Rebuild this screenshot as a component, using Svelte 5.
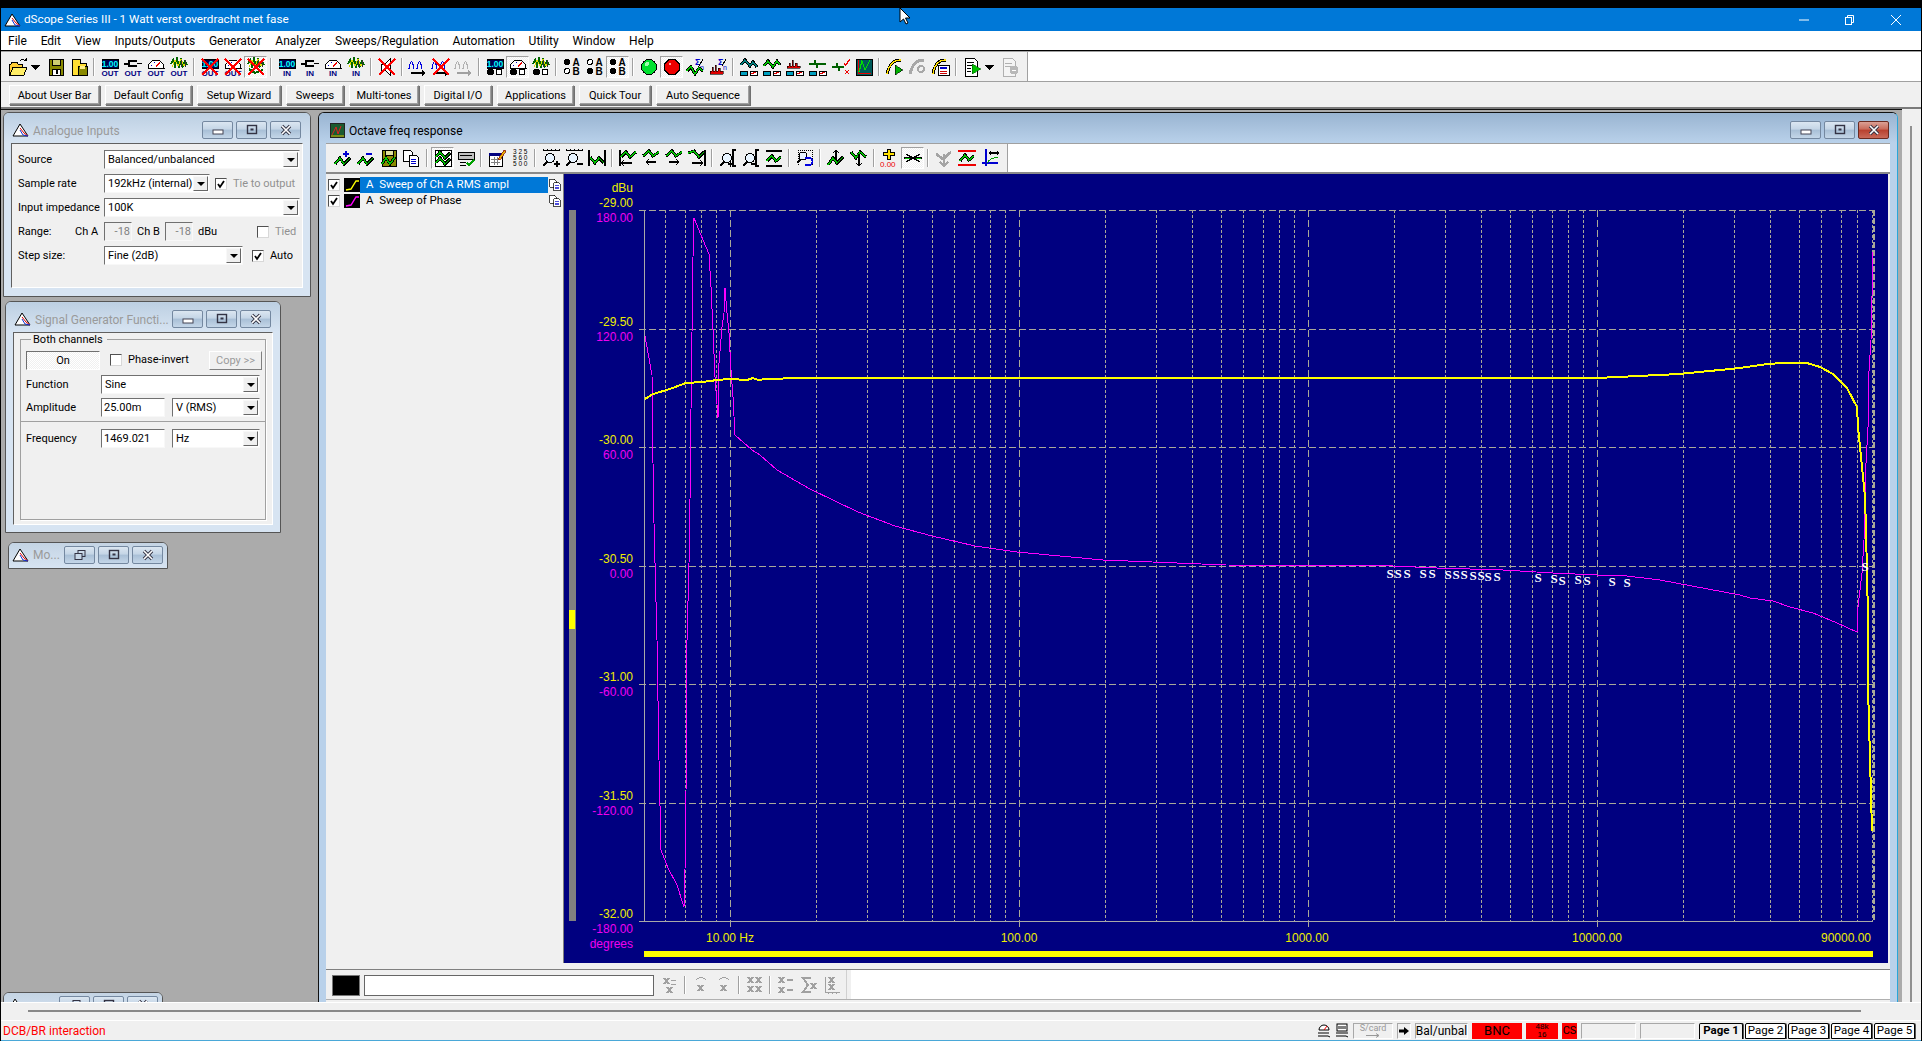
<script>
  const menu = ["File","Edit","View","Inputs/Outputs","Generator","Analyzer","Sweeps/Regulation","Automation","Utility","Window","Help"];
  const userBar = [["About User Bar",91],["Default Config",87],["Setup Wizard",84],["Sweeps",58],["Multi-tones",70],["Digital I/O",68],["Applications",77],["Quick Tour",72],["Auto Sequence",94]];

  // icon parts, all in a 20x20 box
  const lbl = (t) => `<text x="10" y="19" text-anchor="middle" font-size="8" font-weight="700" fill="#000080" font-family="Liberation Sans">${t}</text>`;
  const num = `<rect x="2" y="2" width="16" height="9" fill="#000050" stroke="#000"/><text x="10" y="10" text-anchor="middle" font-size="8.5" font-weight="700" fill="#00ffff" font-family="Liberation Sans">1.00</text>`;
  const sw = `<path d="M1 7h5M6 3v7M6 4h8M6 9h8M14 6.500h5" fill="none" stroke="#000" stroke-width="1.500"/>`;
  const gauge = `<path d="M2 11a8 8 0 0 1 16 0z" fill="#fff" stroke="#000"/><path d="M10 10l4-5" stroke="#e00" stroke-width="1.200"/><path d="M5 8l1 1M8 5v1" stroke="#00c"/>`;
  const noise = `<path d="M2 7l2-4 2 6 2-7 2 7 2-6 2 6 2-5 2 4" fill="none" stroke="#060" stroke-width="2"/><path d="M3 10l3-7 3 6 3-7 3 7 2-3" fill="none" stroke="#dd0" stroke-width="1"/><path d="M12 3v7M16 3v7" stroke="#333"/>`;
  const xmark = `<path d="M2 2L18 18M18 2L2 18" stroke="#f00" stroke-width="2"/>`;
  const dots = (a, b) => `<circle cx="5.500" cy="15" r="3" fill="${a ? "#000" : "#fff"}" stroke="#000"/><circle cx="14" cy="15" r="3" fill="${b ? "#000" : "#fff"}" stroke="#000"/>`;
  const ab = (a, b) => `<circle cx="5" cy="5" r="2.500" fill="${a ? "#000" : "#fff"}" stroke="#000"/><circle cx="5" cy="14" r="2.500" fill="${b ? "#000" : "#fff"}" stroke="#000"/><text x="14" y="9" text-anchor="middle" font-size="10" font-weight="700" font-family="Liberation Sans">A</text><text x="14" y="18" text-anchor="middle" font-size="10" font-weight="700" font-family="Liberation Sans">B</text>`;
  const zig = (p, c = "#00c800") => `<polyline points="${p}" fill="none" stroke="#000" stroke-width="3"/><polyline points="${p}" fill="none" stroke="${c}" stroke-width="1.400"/>`;
  const dual = (c, a) => `<path d="M1 12Q3.500-3 6 12M9 12Q11.500-3 14 12" fill="none" stroke="${c}" stroke-width="1.200"/><path d="M3 15h11v-2l4 3-4 3v-2H3z" fill="${a}"/>`;
  const floppy = `<rect x="3" y="2" width="14" height="16" fill="#8a8a00" stroke="#000"/><rect x="6" y="2" width="8" height="6" fill="#d0d070" stroke="#000"/><rect x="6" y="12" width="8" height="6" fill="#fff" stroke="#000"/><rect x="10" y="13" width="2" height="4"/>`;
  const doc = `<path d="M1 2h7l2 2v9H1z" fill="#fff" stroke="#000"/><path d="M7 7h7l2 2v9H7z" fill="#fff" stroke="#000"/><path d="M9 11h5M9 13h5M9 15h5" stroke="#00c"/>`;
  const slots = `<rect x="1" y="14" width="7" height="4" fill="#00a0c0" stroke="#000"/><rect x="11" y="14" width="7" height="4" fill="#fff" stroke="#000"/><path d="M12 17l5-2" stroke="#d00"/>`;
  const spect = `<path d="M2 11V9h2V6h1v3h2V3h1v6h2V6h2v3h3v2z" fill="#e00000" stroke="#000" stroke-width=".6"/>`;
  const sigma = `<text x="10" y="8" font-size="9" font-weight="700" fill="#00c" font-family="Liberation Sans">Σ</text><path d="M14 9l4-7" stroke="#000"/><text x="15" y="13" font-size="7" fill="#00c" font-family="Liberation Sans">n</text>`;
  const lens = (s) => `<circle cx="9" cy="10" r="4.500" fill="#e8f4ff" stroke="#000" stroke-width="1.200"/><path d="M6 14l-4 4" stroke="#000" stroke-width="2"/><path d="${s}" stroke="#000" stroke-width="1.200"/>`;
  const ruler = `<path d="M2 2h16M2 1v2M6 1v2M10 1v2M14 1v2M18 1v2" stroke="#000"/>`;
  const brk = `<path d="M18 2h-3v16h3" fill="none" stroke="#000" stroke-width="1.200"/>`;
  const arrow = (d) => `<path d="${d}" fill="none" stroke="#000" stroke-width="1.300"/>`;
  const gx = (x, y) => `<path d="M${x} ${y}l5 6M${x + 5} ${y}l-5 6" stroke="#a0a0a0" stroke-width="2"/>`;

  const icons = {
    open: `<path d="M1 7h2l1-2h5l1 2h4v3H5l-3 8H1z" fill="#ffcc33" stroke="#000"/><path d="M5 10h14l-3 8H2z" fill="#ffee66" stroke="#000"/><path d="M12 4q3-3 5 0" fill="none" stroke="#000"/><path d="M15 4h4v-3z"/>`,
    caret: `<path d="M2 8h9l-4.500 5z"/>`,
    floppy,
    saveas: `<path d="M3 2h8v4h6v12H3z" fill="#ffdd33" stroke="#000"/><rect x="9" y="9" width="9" height="9" fill="#8a8a00" stroke="#000"/><rect x="11" y="9" width="5" height="3" fill="#ffee88"/>`,
    out1: num + lbl("OUT"), out2: sw + lbl("OUT"), out3: gauge + lbl("OUT"), out4: noise + lbl("OUT"),
    xout1: num + lbl("OUT") + xmark, xout3: gauge + lbl("OUT") + xmark, xout4: noise + `<path d="M3 12l6 4 8-3" fill="none" stroke="#060" stroke-width="2"/>` + xmark,
    in1: num + lbl("IN"), in2: sw + lbl("IN"), in3: gauge + lbl("IN"), in4: noise + lbl("IN"),
    mute: `<path d="M4 7h4l5-5v16l-5-5H4z" fill="#fff" stroke="#000"/>` + xmark,
    dual: dual("#0000e0", "#000"), xdual: dual("#0000e0", "#000") + xmark, gdual: dual("#b0b0b0", "#a0a0a0"),
    adc1: num + dots(1, 0), adc2: gauge + dots(1, 0), adc3: noise + dots(1, 0),
    ab1: ab(1, 0), ab2: ab(0, 1), ab3: ab(1, 1),
    go: `<circle cx="10" cy="10" r="7.500" fill="#00e030" stroke="#000"/><circle cx="8" cy="7" r="2" fill="#a0ffb0"/>`,
    stop: `<path d="M7 2.500h6L17.500 7v6L13 17.500H7L2.500 13V7z" fill="#ee0000" stroke="#000"/><circle cx="8" cy="7" r="1.500" fill="#ffa0a0"/>`,
    sig1: sigma + zig("2,14 6,10 10,17 14,11 18,14"),
    sig2: sigma + `<path d="M2 17V14h2V10h1v4h2V8h1v6h2v-3h2v3h3v3z" fill="#e00000" stroke="#000" stroke-width=".6"/>`,
    box1: zig("2,8 6,3 11,9 14,5 18,10", "#008080") + slots, box2: zig("2,9 6,4 11,10 15,4 18,8") + slots,
    box3: spect + slots,
    box4: `<path d="M1 7h5l1-4 2 8 1-4h8" fill="none" stroke="#006000" stroke-width="1.300"/>` + slots,
    chk: `<path d="M1 10h4l1-4 2 8 1-4h4" fill="none" stroke="#006000" stroke-width="1.300"/><path d="M13 6l2 2 4-6" fill="none" stroke="#e00" stroke-width="1.400"/><path d="M14 13l4 4M18 13l-4 4" stroke="#e00" stroke-width="1.400"/>`,
    scope: `<rect x="2" y="2" width="16" height="16" fill="#005a5a" stroke="#000"/><path d="M4 3v13h13" fill="none" stroke="#e00"/><path d="M5 15l3-11 3 9 5-10" fill="none" stroke="#00e000" stroke-width="1.200"/>`,
    play1: `<path d="M2 17Q5 3 16 3" fill="none" stroke="#000" stroke-width="3"/><path d="M2 17Q5 3 16 3" fill="none" stroke="#ffe000" stroke-width="1.300"/><path d="M10 8l8 5-8 5z" fill="#00b000" stroke="#000" stroke-width=".6"/>`,
    play2: `<path d="M2 17Q5 3 16 3" fill="none" stroke="#a8a8a8" stroke-width="3"/><circle cx="13" cy="12" r="3" fill="none" stroke="#a8a8a8" stroke-width="2"/>`,
    play3: `<path d="M2 17Q4 3 15 3" fill="none" stroke="#000" stroke-width="3"/><path d="M2 17Q4 3 15 3" fill="none" stroke="#ffe000" stroke-width="1.300"/><rect x="7" y="8" width="11" height="10" fill="#fff" stroke="#000"/><path d="M9 11h7" stroke="#00c" stroke-width="2"/><path d="M9 14h7M9 16h7" stroke="#c00"/>`,
    docplay: `<path d="M3 1h9l3 3v15H3z" fill="#fff" stroke="#000"/><path d="M5 5h7M5 8h5M5 11h4M5 14h4" stroke="#000"/><path d="M10 7l9 5-9 5z" fill="#00c000" stroke="#006000" stroke-width=".6"/>`,
    docgray: `<path d="M3 1h9l3 3v15H3z" fill="#f4f4f4" stroke="#b0b0b0"/><path d="M5 6h7M5 9h7" stroke="#b0b0b0"/><circle cx="14" cy="13" r="4.500" fill="#b8b8b8"/><path d="M12 13h4" stroke="#fff"/>`,
    addw: zig("2,16 7,10 11,16 17,10") + `<path d="M10 6h6M13 3v6" stroke="#0000d0" stroke-width="1.500"/>`,
    subw: zig("2,16 7,10 11,16 17,10") + `<path d="M10 6h6" stroke="#0000d0" stroke-width="1.500"/>`,
    saveg: `<rect x="3" y="2" width="14" height="16" fill="#8a8a00" stroke="#000"/><rect x="6" y="2" width="8" height="5" fill="#e0e0a0" stroke="#000"/>` + zig("3,16 7,10 11,16 16,9"),
    copy: doc,
    graph: `<rect x="2" y="2" width="16" height="16" fill="#fff" stroke="#000"/>` + zig("3,9 7,4 12,10 17,5") + zig("3,15 7,10 12,16 17,11"),
    legend: `<rect x="2" y="4" width="16" height="7" fill="#c0c0c0" stroke="#000"/><path d="M4 7h12M4 14h6M4 17h6" stroke="#000"/><path d="M11 15l2 2 5-5" fill="none" stroke="#00a000" stroke-width="1.600"/>`,
    cal: `<rect x="2" y="5" width="13" height="13" fill="#fff" stroke="#000"/><rect x="2" y="5" width="13" height="3" fill="#000080"/><path d="M4 11h9M4 14h9M7 9v8M10 9v8" stroke="#808080"/><path d="M11 11l6-9 2 1-6 9z" fill="#e8b000" stroke="#800000" stroke-width=".7"/>`,
    data: `<text x="3" y="6" font-size="6.500" font-family="Liberation Sans">3 2 5</text><text x="3" y="12" font-size="6.500" font-family="Liberation Sans">5 6 0</text><text x="3" y="18" font-size="6.500" font-family="Liberation Sans">5 0 0</text>`,
    zin: ruler + lens("M13 16h6M16 13v6"), zout: ruler + lens("M13 16h6"),
    fit: `<path d="M2 2v16M18 2v16" stroke="#000" stroke-width="1.300"/>` + zig("3,9 8,15 12,10 17,15"),
    la: `<path d="M2 2v16" stroke="#000" stroke-width="1.300"/>` + zig("3,9 8,4 12,9 18,4") + arrow("M14 15H3M6 12l-3 3 3 3"),
    lb: zig("2,8 8,3 12,8 18,4") + arrow("M15 14H5M8 11l-3 3 3 3"),
    lc: zig("2,8 8,3 12,8 18,4") + arrow("M5 14h10M12 11l3 3-3 3"),
    ld: `<path d="M18 2v16" stroke="#000" stroke-width="1.300"/>` + zig("1,5 7,3 12,9 17,4") + arrow("M5 15h11M13 12l3 3-3 3"),
    yin: lens("M2 14") + `<path d="M10 16h5M12.500 13.500v5" stroke="#000" stroke-width="1.200"/>` + brk,
    yout: lens("M2 14") + `<path d="M10 16h5" stroke="#000" stroke-width="1.200"/>` + brk,
    fity: `<path d="M2 3h16M2 18h16" stroke="#000" stroke-width="1.200"/>` + zig("3,13 8,8 12,13 17,9"),
    undo: `<path d="M3 2h14M3 2v15M17 2v15" stroke="#000" stroke-dasharray="1 1" fill="none"/><circle cx="8" cy="8" r="4" fill="#e8f4ff" stroke="#000"/><path d="M5 12l-3 3" stroke="#000" stroke-width="2"/><path d="M10 10h4a3 3 0 0 1 0 7h-4" fill="none" stroke="#0000e0" stroke-width="1.800"/>`,
    up: zig("2,17 7,10 11,15 17,9") + arrow("M10 12V2M7 5l3-3 3 3"),
    dn: zig("2,4 7,10 11,4 17,9") + arrow("M10 6v12M7 15l3 3 3-3"),
    cur: `<path d="M9 1v11M3 6h12" stroke="#000" stroke-width="3.400"/><path d="M9 2v9M4 6h10" stroke="#ffe000" stroke-width="1.600"/><text x="0" y="19" font-size="8" fill="#e00" font-family="Liberation Sans">0.00</text>`,
    sel: `<path d="M3 6l14 8M3 14l14-8" stroke="#000" stroke-width="1.300"/><path d="M1 10h7M12 10h7" stroke="#000" stroke-width="2.600"/><path d="M2 10h5M13 10h5" stroke="#00c000" stroke-width="1"/>`,
    gup: `<path d="M2 6l7 5 8-7M10 6v11M6 14l4 4 4-4" fill="none" stroke="#a4a4a4" stroke-width="2.600"/>`,
    red: `<path d="M1 3h18M1 17h18" stroke="#e00" stroke-width="1.300"/>` + zig("3,13 8,7 12,12 17,8"),
    axes: `<path d="M6 1v17M2 15h16" stroke="#0000d0" stroke-width="1.300"/><path d="M7 15Q10 10 18 9" fill="none" stroke="#00a000"/><path d="M9 5h10M11 3l-2 2 2 2M17 3l2 2-2 2" fill="none" stroke="#000" stroke-width="1.200"/>`,
    gjoin: gx(4, 3) + `<path d="M11 5h5M11 9h5" stroke="#a0a0a0"/>` + gx(7, 12),
    gundo: `<path d="M5 5q5-5 10 0" fill="none" stroke="#a0a0a0"/>` + gx(7, 10),
    gredo: `<path d="M15 5q-5-5-10 0" fill="none" stroke="#a0a0a0"/>` + gx(7, 10),
    gcross: gx(3, 2) + gx(11, 2) + gx(3, 11) + gx(11, 11),
    gminus: gx(3, 2) + gx(3, 12) + `<path d="M11 5h6M11 15h6" stroke="#a0a0a0" stroke-width="1.300"/>`,
    gsum: `<path d="M12 3H4l5 7-5 7h8" fill="none" stroke="#a0a0a0" stroke-width="2"/>` + gx(12, 8),
    gbars: gx(7, 2) + gx(7, 9) + `<path d="M3 2v15h15M6 17v2M10 17v2M14 17v2" fill="none" stroke="#a0a0a0"/>`,
  };

  const mainBar = "open caret floppy saveas | out1 out2 out3 out4 | xout1 xout3 xout4* | in1 in2 in3 in4 | mute | dual xdual gdual | adc1 adc2* adc3 | ab1 ab2 ab3* | go stop* sig1 sig2 | box1 box2 box3 box4 chk scope | play1 play2 play3 | docplay caret docgray".split(" ");
  const plotBar = "addw subw saveg copy | graph* legend | cal data | zin zout fit | la lb lc ld | yin yout fity | undo | up dn | cur sel* | gup red axes".split(" ");
  const lowBar = "gjoin | gundo gredo | gcross | gminus gsum gbars".split(" ");

  // plot geometry, in page pixels
  const xAt = (f) => 730 + 289 * Math.log10(f / 10);
  const levels = [329, 447, 566, 684, 803];
  const minor = [];
  const major = [];
  for (let dec = 1; dec <= 10000; dec *= 10) {
    for (let k = dec === 1 ? 6 : 2; k <= 10; k++) {
      const f = dec * k;
      if (f > 90000) continue;
      (k === 10 ? major : minor).push(xAt(f));
    }
  }

  const yellow = "645,399 653,394 670,389 686,383 703,382 717,380 730,379 747,380 753,378 758,380 767,379 800,378 823,378 1300,378 1597,378 1679,374 1740,368 1767,364 1783,363 1807,363 1820,367 1833,374 1847,388 1857,407 1858,427 1861,457 1863,477 1865,497 1866,530 1867,573 1868,617 1868,686 1872,831";
  const phase = "645,336 652,375 653,463 654,523 657,640 659,760 661,850 668,868 677,885 684,907 685,870 686,793 687,640 689,563 690,500 691,410 692,333 693,257 694,218 703,240 709,254 711,287 713,330 715,377 718,418 719,363 722,327 724,313 725,288 727,313 729,333 731,370 733,397 735,435 752,450 760,455 777,470 810,489 858,512 895,526 932,536 975,546 1017,552 1103,560 1226,565 1393,566 1437,568 1503,570 1553,573 1597,575 1627,576 1660,580 1740,595 1750,598 1773,601 1790,607 1813,613 1837,623 1857,632 1858,607 1862,573 1864,540 1866,463 1868,427 1868,387 1871,340 1873,252";

  const yLabels = [["dBu",188,1],["-29.00",203,1],["180.00",218,0],["-29.50",322,1],["120.00",337,0],["-30.00",440,1],["60.00",455,0],["-30.50",559,1],["0.00",574,0],["-31.00",677,1],["-60.00",692,0],["-31.50",796,1],["-120.00",811,0],["-32.00",914,1],["-180.00",929,0],["degrees",944,0]];
  const marks = [[1390,574],[1398,574],[1407,574],[1423,574],[1432,574],[1448,575],[1456,575],[1464,575],[1473,576],[1481,576],[1488,577],[1497,577],[1538,578],[1554,579],[1562,581],[1578,580],[1587,581],[1612,582],[1627,583]];
</script>

{#snippet tool(name)}
  {#if name === "|"}
    <span class="sep"></span>
  {:else}
    {@const key = name.replace("*", "")}
    <span class="tb" class:down={name.endsWith("*")} class:narrow={key === "caret"}>
      <svg viewBox="0 0 20 20" width="20" height="20" class="ico">{@html icons[key]}</svg>
    </span>
  {/if}
{/snippet}

{#snippet logo()}
  <svg class="logo" viewBox="0 0 17 14" width="17" height="14">
    <path d="M8 1L1 13h15z" fill="#fff" stroke="#000"/>
    <path d="M8 5l4 5 4 3" fill="none" stroke="#e00000"/>
    <path d="M8 7l3 5 5 1" fill="none" stroke="#1030d0"/>
  </svg>
{/snippet}

{#snippet capBtn(kind, hot = false)}
  <span class="cap" class:hot>
    <svg viewBox="0 0 14 12" width="14" height="12">
      {#if kind === "min"}
        <rect x="2" y="6" width="10" height="4" fill="#fff" stroke="#445"/>
      {:else if kind === "max"}
        <rect x="2.500" y="1.500" width="9" height="8" fill="none" stroke="#334" stroke-width="1.400"/><rect x="5.500" y="4.500" width="3" height="2" fill="#334"/>
      {:else if kind === "restore"}
        <rect x="5" y="1.500" width="7" height="6" fill="none" stroke="#334"/><rect x="2" y="4.500" width="7" height="6" fill="#c8d8e8" stroke="#334"/>
      {:else}
        <path d="M3 2l8 8M11 2l-8 8" stroke="#334" stroke-width="3.400"/><path d="M3 2l8 8M11 2l-8 8" stroke="#fff" stroke-width="1.600"/>
      {/if}
    </svg>
  </span>
{/snippet}

{#snippet combo(text, cls)}
  <span class={`combo ${cls}`}><span class="val">{text}</span><span class="drop"></span></span>
{/snippet}

{#snippet check(on, text, dim = false)}
  <span class="chkrow" class:dim>
    <span class="chk">
      {#if on}
        <svg viewBox="0 0 10 10" width="10" height="10"><path d="M2 5l2 3 4-6" fill="none" stroke="#000" stroke-width="1.800"/></svg>
      {/if}
    </span>
    {text}
  </span>
{/snippet}

<div class="screen">
  <header class="title">
    {@render logo()}
    <span class="title-text">dScope Series III - 1 Watt verst overdracht met fase</span>
    <div class="sys">
      <svg viewBox="0 0 12 12" width="12" height="12"><path d="M1 6h10" stroke="#fff"/></svg>
      <svg viewBox="0 0 12 12" width="12" height="12"><rect x="1.500" y="3.500" width="6" height="7" fill="none" stroke="#fff"/><path d="M3.500 3.500v-2h6v7h-2" fill="none" stroke="#fff"/></svg>
      <svg viewBox="0 0 12 12" width="12" height="12"><path d="M1 1l10 10M11 1L1 11" stroke="#fff"/></svg>
    </div>
  </header>

  <nav class="menu">
    {#each menu as item}<span class="menu-item">{item}</span>{/each}
  </nav>

  <div class="barline">
    <div class="toolbar main">
      {#each mainBar as t}{@render tool(t)}{/each}
    </div>
  </div>

  <div class="userbar">
    {#each userBar as [label, w]}
      <button class="ub" style={`width:${w}px`}>{label}</button>
    {/each}
  </div>

  <div class="desk">
    <div class="mdi">
      <section class="win analogue">
        <div class="caption">
          {@render logo()}
          <span class="cap-title">Analogue Inputs</span>
          <span class="caps">{@render capBtn("min")}{@render capBtn("max")}{@render capBtn("close")}</span>
        </div>
        <div class="client form">
          <div class="row"><span class="lab">Source</span>{@render combo("Balanced/unbalanced", "w196")}</div>
          <div class="row"><span class="lab">Sample rate</span>{@render combo("192kHz (internal)", "w106")}{@render check(true, "Tie to output", true)}</div>
          <div class="row"><span class="lab">Input impedance</span>{@render combo("100K", "w196")}</div>
          <div class="row">
            <span class="lab short">Range:</span><span class="ch">Ch A</span><span class="num dim">-18</span>
            <span class="ch b">Ch B</span><span class="num dim">-18</span><span class="unit">dBu</span>
            {@render check(false, "Tied", true)}
          </div>
          <div class="row"><span class="lab">Step size:</span>{@render combo("Fine (2dB)", "w139")}<span class="auto">{@render check(true, "Auto")}</span></div>
        </div>
      </section>

      <section class="win generator">
        <div class="caption">
          {@render logo()}
          <span class="cap-title">Signal Generator Functi...</span>
          <span class="caps">{@render capBtn("min")}{@render capBtn("max")}{@render capBtn("close")}</span>
        </div>
        <div class="client gen">
          <div class="frame">
            <span class="legend">Both channels</span>
            <div class="frame-top">
              <div class="row first">
                <span class="on">On</span>
                <span class="phase">{@render check(false, "Phase-invert")}</span>
                <span class="copy">Copy &gt;&gt;</span>
              </div>
              <div class="row"><span class="glab">Function</span>{@render combo("Sine", "w159")}</div>
              <div class="row"><span class="glab">Amplitude</span><span class="num wide">25.00m</span>{@render combo("V (RMS)", "w88")}</div>
            </div>
            <div class="row freq"><span class="glab">Frequency</span><span class="num wide">1469.021</span>{@render combo("Hz", "w88")}</div>
          </div>
        </div>
      </section>

      <section class="win mini mo">
        <div class="caption">
          {@render logo()}
          <span class="cap-title">Mo...</span>
          <span class="caps">{@render capBtn("restore")}{@render capBtn("max")}{@render capBtn("close")}</span>
        </div>
      </section>

      <section class="win mini clipped">
        <div class="caption">
          {@render logo()}
          <span class="caps">{@render capBtn("restore")}{@render capBtn("max")}{@render capBtn("close")}</span>
        </div>
      </section>

      <section class="win octave active">
        <div class="caption">
          <svg class="logo" viewBox="0 0 15 15" width="15" height="15">
            <rect x=".5" y=".5" width="14" height="14" fill="#1a5a30" stroke="#222"/>
            <path d="M2 12L6 4l2 7 3-8" fill="none" stroke="#e02020"/><path d="M1 13h13" stroke="#e0c000"/>
          </svg>
          <span class="cap-title">Octave freq response</span>
          <span class="caps">{@render capBtn("min")}{@render capBtn("max")}{@render capBtn("close", true)}</span>
        </div>
        <div class="plotbar-line">
          <div class="toolbar plotbar">
            {#each plotBar as t}{@render tool(t)}{/each}
          </div>
        </div>
        <div class="plot-body">
          <aside class="traces">
            <div class="trace">
              <span class="chk small"><svg viewBox="0 0 10 10" width="10" height="10"><path d="M2 5l2 3 4-6" fill="none" stroke="#000" stroke-width="1.800"/></svg></span>
              <svg class="swatch" viewBox="0 0 16 14" width="16" height="14"><rect width="16" height="14"/><path d="M2 12l5-1 5-8h3" fill="none" stroke="#ffff00" stroke-width="1.400"/></svg>
              <span class="trace-name sel">A&nbsp; Sweep of Ch A RMS ampl</span>
              <svg class="ico doc" viewBox="0 0 20 20" width="14" height="14">{@html doc}</svg>
            </div>
            <div class="trace">
              <span class="chk small"><svg viewBox="0 0 10 10" width="10" height="10"><path d="M2 5l2 3 4-6" fill="none" stroke="#000" stroke-width="1.800"/></svg></span>
              <svg class="swatch" viewBox="0 0 16 14" width="16" height="14"><rect width="16" height="14"/><path d="M2 12l5-1 5-8h3" fill="none" stroke="#ff00ff" stroke-width="1.400"/></svg>
              <span class="trace-name">A&nbsp; Sweep of Phase</span>
              <svg class="ico doc" viewBox="0 0 20 20" width="14" height="14">{@html doc}</svg>
            </div>
          </aside>
          <div class="plot-col">
            <svg class="plot" viewBox="563 174 1325 789" width="1325" height="789">
              <rect x="563" y="174" width="1325" height="789" fill="#000080"/>
              <path d="M563.500 174v789" stroke="#808080"/>
              <rect x="569" y="210" width="7" height="711" fill="#808080"/>
              <rect x="569" y="610" width="6" height="19" fill="#ffff00"/>
              <g class="crisp">
                <path d="M639 210.500H1873" stroke="#aaa998" stroke-dasharray="7 3"/>
                {#each levels as y}
                  <line x1="639" x2="1873" y1={y + 0.5} y2={y + 0.5} stroke="#aaa998" stroke-dasharray="7 3"/>
                {/each}
                {#each minor as x}
                  <line x1={x} x2={x} y1="210" y2="921" stroke="#aaa998" stroke-dasharray="3 2"/>
                {/each}
                {#each major as x}
                  <line x1={x} x2={x} y1="210" y2="927" stroke="#aaa998" stroke-dasharray="7 3"/>
                {/each}
                <path d="M644.500 210v711M639 921.500H1873" stroke="#a8a8a8"/>
                <path d="M1873.500 210v711" stroke="#aaa998" stroke-width="2" stroke-dasharray="6 2"/>
                <polyline points={phase} fill="none" stroke="#ff00ff"/>
                <polyline points={yellow} fill="none" stroke="#ffff00" stroke-width="2"/>
              </g>
              {#each yLabels as [t, y, isDb]}
                <text x="633" y={y + 4} text-anchor="end" class={isDb ? "ylab db" : "ylab ph"}>{t}</text>
              {/each}
              <text x="730" y="942" text-anchor="middle" class="ylab db">10.00 Hz</text>
              <text x="1019" y="942" text-anchor="middle" class="ylab db">100.00</text>
              <text x="1307" y="942" text-anchor="middle" class="ylab db">1000.00</text>
              <text x="1597" y="942" text-anchor="middle" class="ylab db">10000.00</text>
              <text x="1846" y="942" text-anchor="middle" class="ylab db">90000.00</text>
              <rect x="644" y="951" width="1229" height="6" fill="#ffff00"/>
              {#each marks as [x, y]}
                <text {x} y={y + 4} text-anchor="middle" class="mark">S</text>
              {/each}
              <text x="1865" y="571" text-anchor="middle" class="mark">S</text>
            </svg>
          </div>
        </div>
        <div class="lowline">
          <div class="lowbar">
            <span class="black"></span>
            <span class="entry"></span>
            <div class="toolbar low">
              {#each lowBar as t}{@render tool(t)}{/each}
            </div>
          </div>
        </div>
      </section>
    </div>
    <div class="edge"><span class="edge-bar"></span></div>
  </div>

  <div class="band"><span class="band-bar"></span></div>

  <footer class="status">
    <span class="msg">DCB/BR interaction</span>
    <div class="cells">
      <span class="st icon"><svg viewBox="0 0 14 16" width="14" height="16"><path d="M2 7a5 5 0 0 1 10 0z" fill="#fff" stroke="#000"/><path d="M7 7l3-4" stroke="#e00"/><path d="M1 10h11M1 13h10l2 1" fill="none" stroke="#000"/></svg></span>
      <span class="st icon"><svg viewBox="0 0 14 16" width="14" height="16"><rect x="2" y="1" width="10" height="7" fill="#fff" stroke="#000"/><path d="M4 3v3M6 3v3M8 3v3M10 3v3" stroke="#000"/><path d="M1 10h12M1 13h10l2 1" fill="none" stroke="#000"/></svg></span>
      <span class="st scard">S/card<svg viewBox="0 0 14 5" width="14" height="5"><path d="M0 2.500h13M10 .5l3 2-3 2" fill="none" stroke="#999"/></svg></span>
      <span class="st arrowcell"><svg viewBox="0 0 10 8" width="10" height="8"><path d="M0 2.500h5V0l5 4-5 4V5.500H0z"/></svg></span>
      <span class="st balun">Bal/unbal</span>
      <span class="st red bnc">BNC</span>
      <span class="st red rate"><span>48k</span><span>16</span></span>
      <span class="st red cs">CS</span>
      <span class="st blank"></span>
      <span class="st blank"></span>
      <div class="pages">
        <span class="page cur">Page 1</span>
        <span class="page">Page 2</span>
        <span class="page">Page 3</span>
        <span class="page">Page 4</span>
        <span class="page">Page 5</span>
      </div>
    </div>
  </footer>

  <svg class="pointer" viewBox="0 0 12 18" width="12" height="18">
    <path d="M1 1v14l3.500-3 2.500 5 2-1-2.500-5H11z" fill="#fff" stroke="#000"/>
  </svg>
</div>

<style>
  :global(body) {
    margin: 0;
    background: #000;
  }

  .screen {
    position: relative;
    width: 1922px;
    height: 1041px;
    box-sizing: border-box;
    padding: 8px 1px 0;
    background: #000;
    display: flex;
    flex-direction: column;
    overflow: hidden;
    font: 11px/1 Roboto, "Liberation Sans", sans-serif;
    color: #000;
    white-space: nowrap;
  }

  .title {
    height: 23px;
    flex: none;
    background: #0078d7;
    color: #fff;
    display: flex;
    align-items: center;
    padding-left: 3px;
  }
  .title .logo {
    margin-right: 3px;
  }
  .title-text {
    font-size: 11.700px;
  }
  .sys {
    margin-left: auto;
    display: flex;
    gap: 34px;
    padding-right: 19px;
  }

  .menu {
    height: 19px;
    flex: none;
    background: #fff;
    display: flex;
    align-items: center;
    padding-left: 7px;
    font-size: 12px;
    gap: 13.800px;
  }

  .barline {
    height: 31px;
    flex: none;
    background: #fff;
    border-top: 1px solid #a0a0a0;
    border-bottom: 1px solid #a0a0a0;
    box-sizing: border-box;
    margin-top: 1px;
    display: flex;
  }

  .toolbar {
    display: flex;
    align-items: center;
    background: #f0f0f0;
    box-sizing: border-box;
  }
  .toolbar.main {
    width: 1027px;
    padding-left: 5px;
    border-right: 1px solid #a0a0a0;
  }
  .toolbar.plotbar {
    width: 682px;
    padding-left: 5px;
    border-right: 1px solid #a0a0a0;
  }
  .toolbar.low {
    width: 193px;
    padding-left: 4px;
    border-right: 1px solid #d0d0d0;
  }

  .tb {
    width: 23px;
    height: 22px;
    flex: none;
    box-sizing: border-box;
    display: grid;
    place-items: center;
  }
  .tb.narrow {
    width: 15px;
  }
  .tb.down {
    background: repeating-conic-gradient(#fff 0 25%, #f0f0f0 0 50%) 0 0 / 2px 2px;
    border: 1px solid;
    border-color: #a0a0a0 #fff #fff #a0a0a0;
  }
  .ico {
    shape-rendering: crispEdges;
    display: block;
  }
  .sep {
    width: 8px;
    height: 22px;
    flex: none;
    position: relative;
  }
  .sep::after {
    content: "";
    position: absolute;
    left: 3px;
    top: 2px;
    bottom: 2px;
    width: 1px;
    background: #a0a0a0;
    box-shadow: 1px 0 #fff;
  }

  .userbar {
    height: 25px;
    flex: none;
    background: #f0f0f0;
    display: flex;
    gap: 5px;
    padding: 3px 0 0 8px;
    box-sizing: border-box;
    border-bottom: 0;
  }
  .ub {
    height: 20px;
    padding: 0;
    font: inherit;
    background: #f0f0f0;
    border: 1px solid;
    border-color: #fff #808080 #808080 #fff;
    box-shadow: 1px 1px 0 #707070, inset -1px -1px 0 #a0a0a0;
    color: #000;
  }

  .desk {
    height: 895px;
    flex: none;
    display: flex;
    border-top: 2px solid #7a7a7a;
    box-sizing: border-box;
  }
  .mdi {
    position: relative;
    width: 1901px;
    flex: none;
    background: #ababab;
    border-top: 1px solid #111;
    overflow: hidden;
  }
  .edge {
    flex: 1;
    background: #f0f0f0;
    position: relative;
  }
  .edge-bar {
    position: absolute;
    left: 8px;
    top: 17px;
    bottom: 0;
    width: 2px;
    background: #909090;
  }

  /* windows sit on the MDI desktop */
  .win {
    position: absolute;
    box-sizing: border-box;
    background: #d7e4f2;
    border: 1px solid #555;
    border-radius: 6px 6px 0 0;
  }
  .win.active {
    background: #b9d1ea;
    border-color: #111;
    border-right-color: #29a6d9;
  }
  .analogue {
    left: 2px;
    top: 2px;
    width: 308px;
    height: 185px;
  }
  .generator {
    left: 4px;
    top: 191px;
    width: 276px;
    height: 232px;
  }
  .mo {
    left: 7px;
    top: 432px;
    width: 160px;
    height: 27px;
  }
  .clipped {
    left: 2px;
    top: 882px;
    width: 160px;
    height: 27px;
  }
  .octave {
    left: 317px;
    top: 2px;
    width: 1580px;
    height: 900px;
  }

  .caption {
    height: 30px;
    box-sizing: border-box;
    display: flex;
    align-items: center;
    padding: 4px 9px 0 8px;
    background: linear-gradient(#bccfe2, #d7e4f2);
    border-radius: 5px 5px 0 0;
    color: #9a9a9a;
    font-size: 12px;
  }
  .cap-title {
    padding-top: 1px;
  }
  .active .cap-title {
    padding-top: 2px;
  }
  .active .caption {
    background: linear-gradient(#99b4d1, #b9d1ea);
    color: #000;
    padding-left: 11px;
    padding-right: 8px;
  }
  .mini .caption {
    height: 25px;
    padding: 0 4px 2px 3px;
    background: linear-gradient(#c4d4e4, #d7e4f2);
  }
  .logo {
    flex: none;
    margin-right: 4px;
    display: block;
  }
  .caps {
    margin-left: auto;
    display: flex;
    gap: 3px;
  }
  .cap {
    width: 31px;
    height: 18px;
    box-sizing: border-box;
    display: grid;
    place-items: center;
    border: 1px solid #7488a0;
    border-radius: 2px;
    background: linear-gradient(#dbe6f1 0, #c4d5e6 45%, #a8bfd6 50%, #c4d6e8 100%);
  }
  .cap.hot {
    background: linear-gradient(#dba095 0, #c96a5a 45%, #b8402e 50%, #c96a5a 100%);
    border-color: #6a2a20;
  }

  .client {
    background: #f0f0f0;
    margin: 0 7px;
    box-sizing: border-box;
    border: 1px solid;
    border-color: #606060 #fff #fff #606060;
  }
  .form {
    height: 145px;
    padding-top: 6px;
    display: flex;
    flex-direction: column;
    gap: 5px;
  }
  .row {
    height: 19px;
    display: flex;
    align-items: center;
    padding-left: 6px;
  }
  .lab {
    width: 86px;
    flex: none;
  }
  .lab.short {
    width: 57px;
  }
  .ch {
    width: 29px;
    flex: none;
  }
  .ch.b {
    width: 28px;
    margin-left: 5px;
  }
  .unit {
    width: 54px;
    margin-left: 5px;
    flex: none;
  }
  .num {
    width: 28px;
    height: 19px;
    box-sizing: border-box;
    flex: none;
    background: #fff;
    border: 1px solid;
    border-color: #707070 #f8f8f8 #f8f8f8 #707070;
    display: flex;
    align-items: center;
    justify-content: flex-end;
    padding-right: 1px;
  }
  .num.dim {
    color: #808080;
    background: #f0f0f0;
  }
  .num.wide {
    width: 64px;
    justify-content: flex-start;
    padding-left: 2px;
    margin-right: 7px;
  }

  .combo {
    height: 19px;
    flex: none;
    box-sizing: border-box;
    display: flex;
    background: #fff;
    border: 1px solid;
    border-color: #707070 #f8f8f8 #f8f8f8 #707070;
    padding: 1px;
  }
  .w196 { width: 196px; }
  .w159 { width: 159px; }
  .w139 { width: 139px; }
  .w106 { width: 106px; }
  .w88 { width: 88px; }
  .val {
    flex: 1;
    display: flex;
    align-items: center;
    padding-left: 2px;
  }
  .drop {
    width: 15px;
    flex: none;
    background: #f0f0f0;
    box-sizing: border-box;
    border: 1px solid;
    border-color: #f8f8f8 #666 #666 #f8f8f8;
    display: grid;
    place-items: center;
  }
  .drop::after {
    content: "";
    border: 4px solid transparent;
    border-top: 4px solid #000;
    border-bottom: 0;
  }

  .chkrow {
    display: inline-flex;
    align-items: center;
    gap: 6px;
    margin-left: 5px;
  }
  .chkrow.dim {
    color: #909090;
  }
  .chk {
    width: 12px;
    height: 12px;
    flex: none;
    box-sizing: border-box;
    background: #fff;
    border: 1px solid;
    border-color: #505050 #d8d8d8 #d8d8d8 #505050;
    display: grid;
    place-items: center;
    color: #000;
  }
  .auto {
    display: inline-flex;
    margin-left: 4px;
  }

  .gen {
    height: 193px;
    padding: 6px 6px 0;
  }
  .frame {
    position: relative;
    height: 181px;
    box-sizing: border-box;
    border: 1px solid #a0a0a0;
    box-shadow: 1px 1px 0 #fff;
  }
  .legend {
    position: absolute;
    left: 10px;
    top: -6px;
    background: #f0f0f0;
    padding: 0 4px 0 2px;
  }
  .frame-top {
    height: 82px;
    padding-top: 11px;
    box-sizing: border-box;
    border-bottom: 1px solid #a0a0a0;
    display: flex;
    flex-direction: column;
    gap: 4px;
  }
  .row.first {
    margin-bottom: 1px;
  }
  .freq {
    margin-top: 7px;
  }
  .gen .row {
    padding-left: 5px;
  }
  .glab {
    width: 75px;
    flex: none;
  }
  .on {
    width: 74px;
    height: 19px;
    box-sizing: border-box;
    display: grid;
    place-items: center;
    border: 1px solid;
    border-color: #707070 #fff #fff #707070;
    background: repeating-conic-gradient(#fff 0 25%, #f0f0f0 0 50%) 0 0 / 2px 2px;
  }
  .phase {
    margin-left: 5px;
  }
  .copy {
    margin-left: auto;
    margin-right: 3px;
    width: 53px;
    height: 19px;
    box-sizing: border-box;
    display: grid;
    place-items: center;
    color: #9a9a9a;
    border: 1px solid;
    border-color: #fff #808080 #808080 #fff;
  }

  .plotbar-line {
    height: 31px;
    margin: 0 7px 0 7px;
    box-sizing: border-box;
    background: #fff;
    border-top: 1px solid #a0a0a0;
    border-bottom: 2px solid #8a8a8a;
    display: flex;
  }
  .plot-body {
    display: flex;
    height: 795px;
    margin: 0 7px;
    background: #f0f0f0;
  }
  .traces {
    width: 237px;
    flex: none;
    padding-top: 4px;
    box-sizing: border-box;
    display: flex;
    flex-direction: column;
    gap: 2px;
  }
  .trace {
    height: 14px;
    display: flex;
    align-items: center;
    padding-left: 2px;
    font-size: 11.500px;
  }
  .chk.small {
    width: 12px;
    height: 12px;
    margin-right: 4px;
  }
  .swatch {
    flex: none;
    display: block;
  }
  .trace-name {
    width: 188px;
    height: 16px;
    display: flex;
    align-items: center;
    padding-left: 6px;
    box-sizing: border-box;
  }
  .trace-name.sel {
    background: #0078d7;
    color: #fff;
  }
  .doc {
    margin-left: 1px;
  }
  .plot-col {
    width: 1325px;
    flex: none;
  }
  .plot {
    display: block;
  }
  .crisp {
    shape-rendering: crispEdges;
  }
  .ylab {
    font: 12px "Liberation Sans", sans-serif;
  }
  .db {
    fill: #eeee00;
  }
  .ph {
    fill: #f000f0;
  }
  .mark {
    font: 700 13px "Liberation Serif", serif;
    fill: #fff;
  }

  .lowline {
    margin: 0 7px;
    background: #f0f0f0;
    height: 42px;
  }
  .lowbar {
    height: 31px;
    box-sizing: border-box;
    border-top: 1px solid #808080;
    border-bottom: 1px solid #b0b0b0;
    display: flex;
    align-items: stretch;
    background: linear-gradient(90deg, #f0f0f0 525px, #fff 525px);
  }
  .black {
    width: 28px;
    height: 21px;
    margin: 5px 0 0 6px;
    background: #000;
    border: 1px solid #777;
    box-sizing: border-box;
  }
  .entry {
    width: 290px;
    height: 21px;
    margin: 5px 0 0 4px;
    background: #fff;
    border: 1px solid #666;
    box-sizing: border-box;
  }

  .band {
    height: 18px;
    flex: none;
    background: #f0f0f0;
    border-top: 1px solid #fff;
    box-sizing: border-box;
    padding: 7px 0 0 27px;
  }
  .band-bar {
    display: block;
    width: 1833px;
    height: 2px;
    background: #888;
  }

  .status {
    height: 21px;
    flex: none;
    box-sizing: border-box;
    background: #f0f0f0;
    border-top: 1px solid #fff;
    border-bottom: 1px solid #4aa8d8;
    display: flex;
    align-items: center;
    padding: 0 6px 0 2px;
  }
  .msg {
    color: #ff0000;
    font-size: 12px;
  }
  .cells {
    margin-left: auto;
    display: flex;
    align-items: center;
    gap: 4px;
    height: 17px;
  }
  .st {
    height: 16px;
    box-sizing: border-box;
    flex: none;
    display: flex;
    align-items: center;
    justify-content: center;
    border: 1px solid;
    border-color: #a8a8a8 #fff #fff #a8a8a8;
  }
  .icon {
    width: 14px;
    border: 0;
  }
  .scard {
    width: 40px;
    flex-direction: column;
    font-size: 9px;
    color: #999;
  }
  .arrowcell {
    width: 14px;
  }
  .balun {
    width: 53px;
    font-size: 12px;
  }
  .red {
    background: #ff0000;
    border-color: #ff0000;
  }
  .bnc {
    width: 50px;
    font-size: 13px;
  }
  .rate {
    width: 32px;
    flex-direction: column;
    font: 8px/7.500px "Liberation Sans", sans-serif;
  }
  .cs {
    width: 15px;
    font-size: 11px;
  }
  .blank {
    width: 55px;
  }
  .pages {
    display: flex;
    gap: 2px;
    height: 16px;
  }
  .page {
    width: 41px;
    height: 16px;
    box-sizing: border-box;
    display: grid;
    place-items: center;
    background: #fff;
    border: 1px solid #000;
    border-radius: 2px 2px 0 0;
    box-shadow: 1px 0 0 #555;
    font-size: 11.500px;
  }
  .page.cur {
    width: 44px;
    font-weight: 700;
    background: #f0f0f0;
    border-bottom: 0;
  }

  .pointer {
    position: absolute;
    left: 899px;
    top: 7px;
  }
</style>
